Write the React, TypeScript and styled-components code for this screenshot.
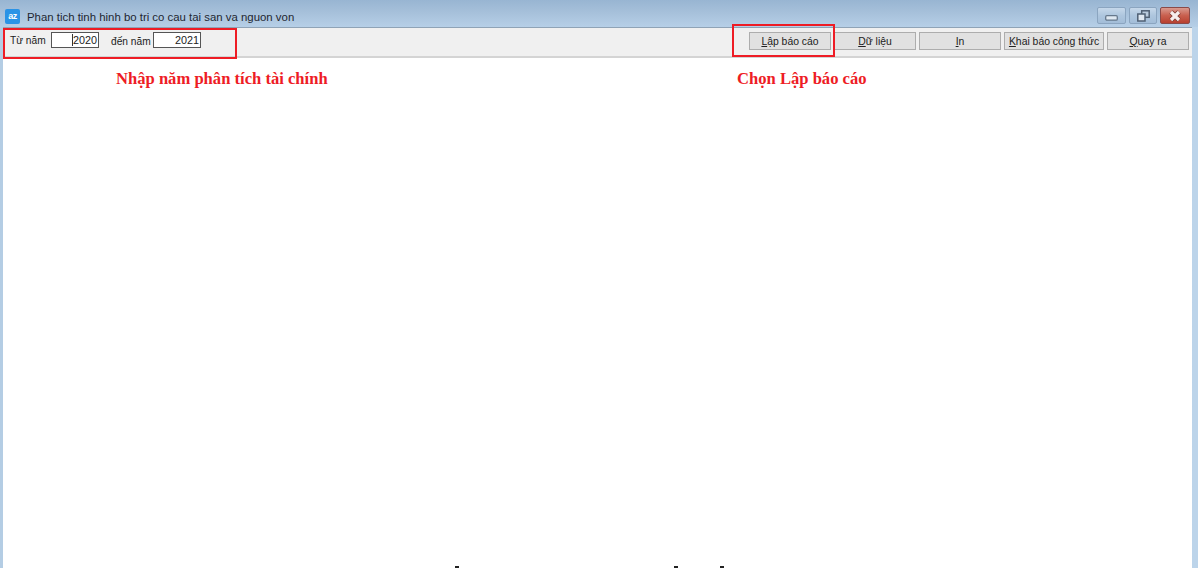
import React from "react";
import styled, { createGlobalStyle } from "styled-components";

const GlobalStyle = createGlobalStyle`
  html, body {
    margin: 0;
    padding: 0;
    background: #fff;
  }
  * {
    box-sizing: border-box;
  }
`;

const Frame = styled.div`
  position: relative;
  width: 1198px;
  height: 568px;
  overflow: hidden;
  display: flex;
  flex-direction: column;
  padding: 0 6px 0 3px;
  background: linear-gradient(90deg, #b4cde4 0%, #bcd4ea 100%);
  font-family: "Liberation Sans", Arial, sans-serif;
`;

const TitleBar = styled.div`
  height: 27px;
  flex: none;
  margin: 0 -6px 0 -3px;
  padding: 0 8px 0 5px;
  display: flex;
  align-items: flex-start;
  background: linear-gradient(180deg, #98b5d2 0%, #a6c0da 45%, #b6cfe7 100%);
`;

const AppIcon = styled.div`
  width: 15px;
  height: 15px;
  margin-top: 9px;
  border-radius: 2px;
  background: #2a93e6;
  color: #fff;
  font-size: 9px;
  font-weight: bold;
  line-height: 14px;
  text-align: center;
  letter-spacing: -0.4px;
`;

const Title = styled.div`
  margin: 10px 0 0 7px;
  font-size: 11.4px;
  line-height: 14px;
  color: #1e2630;
  flex: 1;
`;

const WindowButtons = styled.div`
  display: flex;
  gap: 3px;
  margin-top: 7px;
`;

const WindowButton = styled.div<{ $close?: boolean; $w: number }>`
  width: ${({ $w }) => $w}px;
  height: 17px;
  border-radius: 2px;
  border: 1px solid ${({ $close }) => ($close ? "#8a4a48" : "#8ba5c0")};
  background: ${({ $close }) =>
    $close
      ? "linear-gradient(180deg, #d99a8f 0%, #c9604f 50%, #b8402f 100%)"
      : "linear-gradient(180deg, #c6d8ea 0%, #aec6de 50%, #a3bdd8 100%)"};
  display: flex;
  align-items: center;
  justify-content: center;
`;

const Content = styled.div`
  flex: 1;
  background: #fff;
  border-top: 1px solid #8fa3b6;
  display: flex;
  flex-direction: column;
`;

const Toolbar = styled.div`
  height: 30px;
  flex: none;
  display: flex;
  align-items: flex-start;
  justify-content: space-between;
  padding: 4px 3px 0 7px;
  background: #f0f0f0;
  border-bottom: 2px solid #d4d4d4;
`;

const YearGroup = styled.div`
  display: flex;
  align-items: center;
  font-size: 10.2px;
  color: #222;
`;

const YearLabel = styled.span<{ $w: number; $drop: number }>`
  width: ${({ $w }) => $w}px;
  padding-top: ${({ $drop }) => $drop}px;
  white-space: nowrap;
`;

const YearInput = styled.div<{ $w: number; $mr?: number }>`
  width: ${({ $w }) => $w}px;
  height: 16px;
  margin-right: ${({ $mr }) => $mr ?? 0}px;
  border: 1px solid #555;
  background: #fff;
  font-size: 10.8px;
  line-height: 14px;
  text-align: right;
  padding-right: 1px;
  color: #222;
`;

const Caret = styled.span`
  border-left: 1px solid #333;
`;

const ButtonRow = styled.div`
  display: flex;
  gap: 3px;
`;

const ToolButton = styled.div<{ $w: number }>`
  width: ${({ $w }) => $w}px;
  height: 18px;
  background: #e1e1e1;
  border: 1px solid #adadad;
  font-size: 10.4px;
  line-height: 18px;
  text-align: center;
  color: #222;

  u {
    text-underline-offset: 1px;
  }
`;

const Note = styled.div<{ $left: number }>`
  position: absolute;
  top: 70px;
  left: ${({ $left }) => $left}px;
  font-family: "Liberation Serif", "Times New Roman", serif;
  font-size: 16.6px;
  line-height: 18px;
  font-weight: bold;
  color: #ee1c25;
  white-space: nowrap;
`;

const Highlight = styled.div<{ $l: number; $t: number; $w: number; $h: number }>`
  position: absolute;
  left: ${({ $l }) => $l}px;
  top: ${({ $t }) => $t}px;
  width: ${({ $w }) => $w}px;
  height: ${({ $h }) => $h}px;
  border: 2px solid #ee1c25;
`;

const Tick = styled.div<{ $l: number }>`
  position: absolute;
  left: ${({ $l }) => $l}px;
  top: 566px;
  width: 4px;
  height: 2px;
  background: #222;
`;

export default function App() {
  return (
    <>
      <GlobalStyle />
      <Frame>
        <TitleBar>
          <AppIcon>az</AppIcon>
          <Title>Phan tich tinh hinh bo tri co cau tai san va nguon von</Title>
          <WindowButtons>
            <WindowButton $w={29}>
              <svg width="13" height="11" viewBox="0 0 13 11">
                <rect x="0.7" y="5.7" width="11.6" height="4.4" rx="1.2" fill="#dfe8f1" stroke="#66788c" strokeWidth="1.3" />
              </svg>
            </WindowButton>
            <WindowButton $w={28}>
              <svg width="13" height="12" viewBox="0 0 13 12">
                <rect x="4.7" y="0.8" width="7.5" height="6.5" fill="#b9cbdd" stroke="#4f6074" strokeWidth="1.5" />
                <rect x="0.8" y="4" width="7.2" height="7" fill="#dfe8f1" stroke="#4f6074" strokeWidth="1.5" />
              </svg>
            </WindowButton>
            <WindowButton $w={30} $close>
              <svg width="16" height="12" viewBox="0 0 16 12">
                <path d="M4 2 L12 10 M12 2 L4 10" stroke="#7a3a30" strokeWidth="4.8" />
                <path d="M4 2 L12 10 M12 2 L4 10" stroke="#f6eeec" strokeWidth="3.2" />
              </svg>
            </WindowButton>
          </WindowButtons>
        </TitleBar>
        <Content>
          <Toolbar>
            <YearGroup>
              <YearLabel $w={41} $drop={1}>Từ năm</YearLabel>
              <YearInput $w={48} $mr={12}>
                <Caret />2020
              </YearInput>
              <YearLabel $w={42} $drop={3}>đến năm</YearLabel>
              <YearInput $w={48}>2021</YearInput>
            </YearGroup>
            <ButtonRow>
              <ToolButton $w={82}>
                <u>L</u>ập báo cáo
              </ToolButton>
              <ToolButton $w={82}>
                <u>D</u>ữ liệu
              </ToolButton>
              <ToolButton $w={82}>
                <u>I</u>n
              </ToolButton>
              <ToolButton $w={100}>
                <u>K</u>hai báo công thức
              </ToolButton>
              <ToolButton $w={82}>
                <u>Q</u>uay ra
              </ToolButton>
            </ButtonRow>
          </Toolbar>
        </Content>
        <Highlight $l={3} $t={28} $w={234} $h={31} />
        <Highlight $l={732} $t={24} $w={103} $h={33} />
        <Note $left={116}>Nhập năm phân tích tài chính</Note>
        <Note $left={737}>Chọn Lập báo cáo</Note>
        <Tick $l={455} />
        <Tick $l={674} />
        <Tick $l={720} />
      </Frame>
    </>
  );
}
